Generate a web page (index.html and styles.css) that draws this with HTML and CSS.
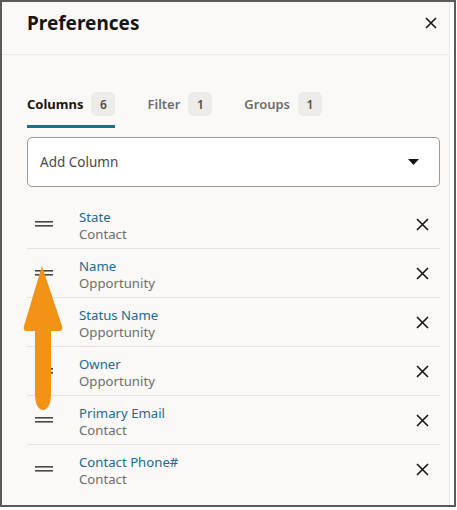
FILE: index.html
```html
<!DOCTYPE html>
<html>
<head>
<meta charset="utf-8">
<link rel="stylesheet" href="styles.css">
</head>
<body>
<div class="frame">
  <div class="panel">
    <div class="header">
      <h1 class="title">Preferences</h1>
      <svg class="close" width="12" height="12" viewBox="0 0 12 12"><path d="M1 1L11 11M11 1L1 11" stroke="#161513" stroke-width="1.6" fill="none"/></svg>
    </div>
    <div class="content">
      <div class="tabs">
        <div class="tab active"><span>Columns</span><span class="badge">6</span></div>
        <div class="tab"><span>Filter</span><span class="badge">1</span></div>
        <div class="tab"><span>Groups</span><span class="badge">1</span></div>
      </div>
      <div class="select">
        <span>Add Column</span>
        <svg width="11" height="6" viewBox="0 0 11 6"><path d="M0 0H11L5.5 6Z" fill="#161513"/></svg>
      </div>
      <div class="list">
        <div class="row">
          <svg class="handle" width="18" height="6" viewBox="0 0 18 6"><rect x="0" y="0" width="18" height="1.6" fill="#4a4846"/><rect x="0" y="4" width="18" height="1.6" fill="#4a4846"/></svg>
          <div class="text"><div class="name">State</div><div class="sub">Contact</div></div>
          <svg class="x" width="13" height="13" viewBox="0 0 13 13"><path d="M1 1L12 12M12 1L1 12" stroke="#161513" stroke-width="1.6" fill="none"/></svg>
        </div>
        <div class="row">
          <svg class="handle" width="18" height="6" viewBox="0 0 18 6"><rect x="0" y="0" width="18" height="1.6" fill="#4a4846"/><rect x="0" y="4" width="18" height="1.6" fill="#4a4846"/></svg>
          <div class="text"><div class="name">Name</div><div class="sub">Opportunity</div></div>
          <svg class="x" width="13" height="13" viewBox="0 0 13 13"><path d="M1 1L12 12M12 1L1 12" stroke="#161513" stroke-width="1.6" fill="none"/></svg>
        </div>
        <div class="row">
          <svg class="handle" width="18" height="6" viewBox="0 0 18 6"><rect x="0" y="0" width="18" height="1.6" fill="#4a4846"/><rect x="0" y="4" width="18" height="1.6" fill="#4a4846"/></svg>
          <div class="text"><div class="name">Status Name</div><div class="sub">Opportunity</div></div>
          <svg class="x" width="13" height="13" viewBox="0 0 13 13"><path d="M1 1L12 12M12 1L1 12" stroke="#161513" stroke-width="1.6" fill="none"/></svg>
        </div>
        <div class="row">
          <svg class="handle" width="18" height="6" viewBox="0 0 18 6"><rect x="0" y="0" width="18" height="1.6" fill="#4a4846"/><rect x="0" y="4" width="18" height="1.6" fill="#4a4846"/></svg>
          <div class="text"><div class="name">Owner</div><div class="sub">Opportunity</div></div>
          <svg class="x" width="13" height="13" viewBox="0 0 13 13"><path d="M1 1L12 12M12 1L1 12" stroke="#161513" stroke-width="1.6" fill="none"/></svg>
        </div>
        <div class="row">
          <svg class="handle" width="18" height="6" viewBox="0 0 18 6"><rect x="0" y="0" width="18" height="1.6" fill="#4a4846"/><rect x="0" y="4" width="18" height="1.6" fill="#4a4846"/></svg>
          <div class="text"><div class="name">Primary Email</div><div class="sub">Contact</div></div>
          <svg class="x" width="13" height="13" viewBox="0 0 13 13"><path d="M1 1L12 12M12 1L1 12" stroke="#161513" stroke-width="1.6" fill="none"/></svg>
        </div>
        <div class="row">
          <svg class="handle" width="18" height="6" viewBox="0 0 18 6"><rect x="0" y="0" width="18" height="1.6" fill="#4a4846"/><rect x="0" y="4" width="18" height="1.6" fill="#4a4846"/></svg>
          <div class="text"><div class="name">Contact Phone#</div><div class="sub">Contact</div></div>
          <svg class="x" width="13" height="13" viewBox="0 0 13 13"><path d="M1 1L12 12M12 1L1 12" stroke="#161513" stroke-width="1.6" fill="none"/></svg>
        </div>
      </div>
    </div>
  </div>
  <svg class="arrow" width="44" height="150" viewBox="0 0 44 150"><path d="M20 2 L40 62 Q41.5 67 37 67 L29 67 L29 130 C29 141 25 146 21 146 C17 146 13 141 13 130 L13 67 L5 67 Q0.5 67 2 62 Z" fill="#f39315"/></svg>
</div>
</body>
</html>
```

FILE: styles.css
```css
html, body {
  margin: 0;
  padding: 0;
  background: #ffffff;
}

.frame {
  position: relative;
  width: 452px;
  height: 503px;
  border: 2px solid #5a5a5a;
  background: #ffffff;
  font-family: "Noto Sans", "Open Sans", sans-serif;
  color: #161513;
}

.panel {
  width: 447px;
  height: 503px;
  background: #faf9f8;
  border-right: 1px solid #eeedeb;
}

.header {
  display: flex;
  align-items: center;
  justify-content: space-between;
  height: 41px;
  padding: 0 12px 11px 25px;
  border-bottom: 1px solid #ebe9e6;
}

.title {
  margin: 0;
  font-size: 19px;
  font-weight: 700;
  line-height: 28px;
}

.close {
  display: block;
}

.content {
  padding: 37px 0 0 25px;
  width: 413px;
}

.tabs {
  display: flex;
  gap: 32px;
}

.tab {
  display: flex;
  align-items: center;
  gap: 8px;
  height: 24px;
  padding-bottom: 9px;
  border-bottom: 3px solid transparent;
  font-size: 13px;
  font-weight: 600;
  color: #6f6c69;
}

.tab.active {
  color: #161513;
  font-weight: 700;
  border-bottom-color: #1f6c8c;
}

.badge {
  display: flex;
  align-items: center;
  justify-content: center;
  width: 24px;
  height: 24px;
  border-radius: 5px;
  background: #eeece9;
  color: #4f4c49;
  font-size: 12px;
  font-weight: 600;
}

.select {
  display: flex;
  align-items: center;
  justify-content: space-between;
  margin-top: 9px;
  height: 48px;
  padding: 0 20px 0 12px;
  border: 1px solid #9a9794;
  border-radius: 5px;
  background: #ffffff;
  font-size: 13.5px;
  color: #4a4744;
}

.list {
  margin-top: 13px;
}

.row {
  display: flex;
  align-items: center;
  height: 48px;
  border-bottom: 1px solid #e4e2df;
}

.row:last-child {
  border-bottom: none;
}

.handle {
  display: block;
  margin-left: 8px;
  margin-right: 26px;
}

.text {
  flex: 1;
  padding-top: 3px;
  font-size: 13.2px;
  line-height: 17px;
}

.name {
  color: #22698b;
}

.sub {
  color: #6f6c69;
}

.x {
  display: block;
  margin-right: 11px;
}

.arrow {
  position: absolute;
  left: 20px;
  top: 262px;
}
```
